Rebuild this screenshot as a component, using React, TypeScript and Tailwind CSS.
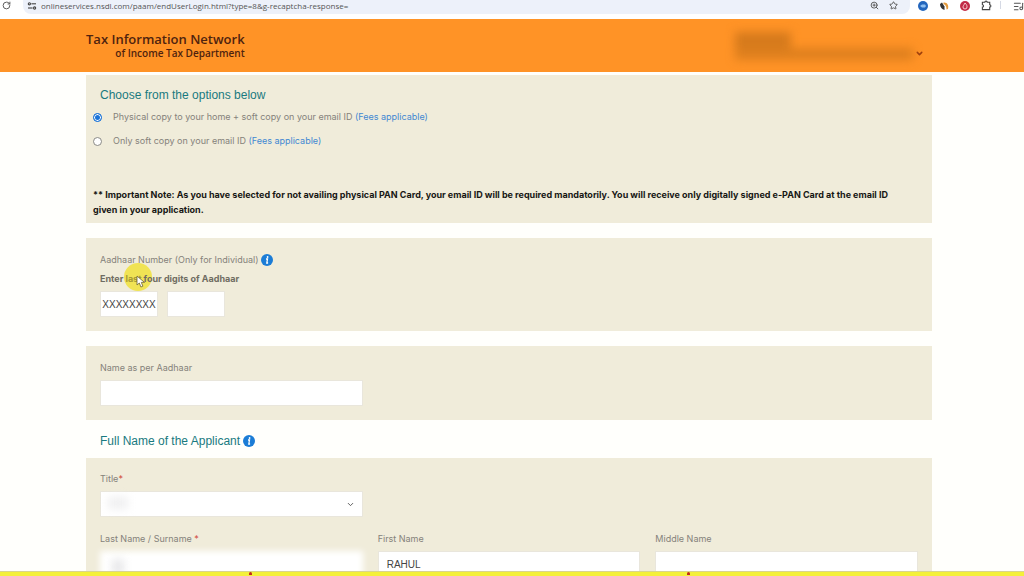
import type { FC, PropsWithChildren, ReactNode } from "react";
import { ChevronDown, ListMusic, RotateCw, Star, ZoomIn } from "lucide-react";

const Panel: FC<PropsWithChildren<{ className: string }>> = ({ className, children }) => (
  <section className={`bg-[#f0ecda] ${className}`}>{children}</section>
);

const Heading: FC<PropsWithChildren> = ({ children }) => (
  <h2 className="flex items-center gap-[3px] font-['Liberation_Sans',Arial,sans-serif] text-[12px] leading-4 text-[#197a80]">
    {children}
  </h2>
);

const InfoButton: FC<{ label: string }> = ({ label }) => (
  <button type="button" aria-label={label} className="shrink-0">
    <svg viewBox="0 0 12 12" className="size-3">
      <circle cx="6" cy="6" r="6" fill="#1b7cd6" />
      <circle cx="6.6" cy="3" r="0.9" fill="#fff" />
      <path d="M5 5h1.500L5.800 9h1.300" fill="none" stroke="#fff" strokeWidth="1.3" />
    </svg>
  </button>
);

interface OptionProps {
  id: string;
  label: string;
  defaultChecked?: boolean;
}

const Option: FC<OptionProps> = ({ id, label, defaultChecked }) => (
  <div className="flex items-center gap-[11px] h-4">
    <input
      type="radio"
      id={id}
      name="copy"
      defaultChecked={defaultChecked}
      className="appearance-none size-[9px] rounded-full border border-[#8a8a86] bg-white checked:border-[#1a73d8] checked:bg-[#1a73d8] checked:shadow-[inset_0_0_0_1px_white]"
    />
    <label htmlFor={id}>
      {label} <a href="#fees" className="text-[#4288d2]">(Fees applicable)</a>
    </label>
  </div>
);

interface FieldProps {
  id: string;
  label: ReactNode;
  children: ReactNode;
}

const Field: FC<FieldProps> = ({ id, label, children }) => (
  <div className="flex flex-col gap-1">
    <label htmlFor={id} className="leading-4">{label}</label>
    {children}
  </div>
);

const inputClass =
  "w-full h-[26px] bg-white border border-[#e9e6dc] font-['Liberation_Sans',Arial,sans-serif] text-[10px] text-[#444] outline-none";

const Required = () => <span className="text-[#d0483c]">*</span>;

const BrowserBar = () => (
  <div className="flex h-[19px] shrink-0 items-start bg-white text-[#555]">
    <button type="button" aria-label="Reload" className="ml-0.5 mt-px">
      <RotateCw size={9} strokeWidth={2.5} />
    </button>
    <div className="ml-3 flex h-[14px] flex-1 items-start gap-1 rounded-b-lg bg-[#edf1fa]">
      <button type="button" aria-label="Site information" className="ml-1 mt-px">
        <svg viewBox="0 0 10 10" className="size-[10px]" fill="none" stroke="#444" strokeWidth="1.1">
          <circle cx="2.4" cy="2.8" r="1.1" />
          <path d="M4.400 2.800H9" />
          <circle cx="7.6" cy="7" r="1.1" />
          <path d="M1 7h4.600" />
        </svg>
      </button>
      <input
        aria-label="Address"
        readOnly
        value="onlineservices.nsdl.com/paam/endUserLogin.html?type=8&g-recaptcha-response="
        className="h-3 flex-1 bg-transparent font-['Open_Sans',sans-serif] text-[8px] leading-3 text-[#555] outline-none"
      />
      <button type="button" aria-label="Zoom" className="mr-1.5 mt-px">
        <ZoomIn size={9} strokeWidth={2.5} />
      </button>
      <button type="button" aria-label="Bookmark" className="mr-3 mt-px">
        <Star size={9} strokeWidth={2.5} />
      </button>
    </div>
    <div className="ml-2 flex items-center gap-[11px]">
      <svg viewBox="0 0 10 10" className="size-[10px]">
        <circle cx="5" cy="5" r="5" fill="#2366bd" />
        <path d="M2 5l2-1.500h3L8 5 7 6.500H4z" fill="#8fc0f2" />
      </svg>
      <svg viewBox="0 0 10 10" className="size-[10px]">
        <path d="M1 3l2-1.500 2.500 4V9C3 8.500 1 6 1 3z" fill="#333" />
        <path d="M4.500 1.500C8 1 10 4 9 8L7.500 8.500C7.500 5.500 6.500 4 4.500 3z" fill="#e49a3c" />
      </svg>
      <svg viewBox="0 0 10 10" className="size-[10px]">
        <circle cx="5" cy="5" r="5" fill="#c22c47" />
        <path d="M5 2c2 2 2 3 2 4a2 2 0 0 1-4 0c0-1 1-2 2-4z" fill="none" stroke="#f8ccd2" />
      </svg>
      <button type="button" aria-label="Extensions">
        <svg viewBox="0 0 12 12" className="size-[11px]" fill="none" stroke="#444" strokeWidth="1.2">
          <path d="M1.500 2.500h2.700a1.300 1.300 0 0 1 2.600 0h2.700v2.700a1.300 1.300 0 0 1 0 2.600v2.700h-8V7.800a1.300 1.300 0 0 0 0-2.600z" />
        </svg>
      </button>
    </div>
    <div className="ml-2 mt-px h-2 w-px bg-[#d5d9e4]" />
    <button type="button" aria-label="Media" className="ml-3 mt-px w-[11px] overflow-hidden">
      <ListMusic size={11} strokeWidth={2.2} />
    </button>
  </div>
);

const Header = () => (
  <header className="flex h-[53px] shrink-0 justify-between bg-[#ff9326] pl-[86px] pr-[100px]">
    <h1 className="pt-3 text-right font-['Open_Sans',sans-serif] font-semibold text-[#4f230f]">
      <span className="block text-[13px] leading-4">Tax Information Network</span>
      <span className="block text-[10px] leading-3">of Income Tax Department</span>
    </h1>
    <button type="button" aria-label="Account" className="flex items-end gap-0.5 pb-3">
      <span className="flex flex-col blur-[5px]">
        <span className="h-4 w-[56px] bg-[#d67a1c]" />
        <span className="h-3 w-[178px] bg-[#d67a1c]/80" />
      </span>
      <ChevronDown size={9} strokeWidth={4} className="mb-0.5 text-[#9c3d0c]" />
    </button>
  </header>
);

const OptionsPanel = () => (
  <Panel className="h-[148px] px-[7px] pt-3">
    <div className="pl-[7px]">
      <Heading>Choose from the options below</Heading>
    </div>
    <div className="mt-1.5 flex flex-col gap-2">
      <Option id="physical" label="Physical copy to your home + soft copy on your email ID" defaultChecked />
      <Option id="soft" label="Only soft copy on your email ID" />
    </div>
    <p className="mt-[38px] pr-3 font-bold leading-[15px] text-[#171714]">
      ** Important Note: As you have selected for not availing physical PAN Card, your email ID will
      be required mandatorily. You will receive only digitally signed e-PAN Card at the email ID
      given in your application.
    </p>
  </Panel>
);

const AadhaarPanel = () => (
  <Panel className="mt-[15px] h-[93px] px-[14px] pt-[14px]">
    <div className="flex items-center gap-[3px] leading-4">
      Aadhaar Number (Only for Individual)
      <InfoButton label="About Aadhaar number" />
    </div>
    <div className="relative mt-[3px] w-fit leading-4">
      <div className="absolute -top-2 left-6 size-7 rounded-full bg-[#f0e23c]/85" />
      <label htmlFor="digits" className="relative font-bold text-[#6f6c62]">
        Enter <span className="text-[#a69a35]">last</span> four digits of Aadhaar
      </label>
      <svg viewBox="0 0 10 14" className="absolute left-9 top-1 h-[14px] w-[10px]">
        <path d="M1 1v9l2.300-2 1.600 4 2-.8L5.300 7.400H8.500z" fill="#fff" stroke="#6d6632" strokeWidth="0.8" />
      </svg>
    </div>
    <div className="mt-1 flex gap-[9px]">
      <div className="w-[58px]">
        <input aria-label="Masked digits" readOnly value="XXXXXXXX" className={`${inputClass} text-center`} />
      </div>
      <div className="w-[58px]">
        <input id="digits" className={inputClass} />
      </div>
    </div>
  </Panel>
);

const NamePanel = () => (
  <Panel className="mt-[15px] h-[74px] px-[14px] pt-[14px]">
    <div className="grid grid-cols-3 gap-[15px]">
      <Field id="aadhaar-name" label="Name as per Aadhaar">
        <input id="aadhaar-name" className={inputClass} />
      </Field>
    </div>
  </Panel>
);

const ApplicantPanel = () => (
  <Panel className="px-[14px] pb-4 pt-[13px]">
    <div className="grid grid-cols-3 gap-x-[15px] gap-y-[14px]">
      <Field id="title" label={<>Title<Required /></>}>
        <div className="relative">
          <select id="title" className={`${inputClass} block appearance-none`} />
          <span className="absolute left-2 top-1.5 h-3 w-5 bg-[#f0f0f1] blur-[4px]" />
          <ChevronDown size={9} strokeWidth={2.5} className="absolute right-2 top-[9px] text-[#555]" />
        </div>
      </Field>
      <div className="col-span-2" />
      <Field id="last-name" label={<>Last Name / Surname <Required /></>}>
        <div className="relative">
          <input id="last-name" className="w-full h-[26px] bg-white outline-none blur-[3px]" />
          <span className="absolute left-3 top-2 h-4 w-3 bg-[#e8e8ea] blur-[4px]" />
        </div>
      </Field>
      <Field id="first-name" label="First Name">
        <input id="first-name" defaultValue="RAHUL" className={`${inputClass} px-2`} />
      </Field>
      <Field id="middle-name" label="Middle Name">
        <input id="middle-name" className={inputClass} />
      </Field>
    </div>
  </Panel>
);

export default function App() {
  return (
    <div className="flex h-screen flex-col overflow-hidden bg-[#fffffc] font-['Inter',Arial,sans-serif] text-[9px] text-[#85827a]">
      <BrowserBar />
      <Header />
      <main className="min-h-0 flex-1 overflow-hidden pl-[86px] pr-[92px] pt-[3px]">
        <OptionsPanel />
        <AadhaarPanel />
        <NamePanel />
        <div className="pb-[9px] pl-[14px] pt-[13px]">
          <Heading>
            Full Name of the Applicant
            <InfoButton label="About applicant name" />
          </Heading>
        </div>
        <ApplicantPanel />
      </main>
      <footer className="flex h-[5px] shrink-0 justify-between border-t border-[#d9d68a] bg-[#f4f03a] pl-[249px] pr-[334px]">
        <span className="size-[3px] rounded-t-full bg-[#c22a1c]" />
        <span className="size-[3px] rounded-t-full bg-[#c22a1c]" />
      </footer>
    </div>
  );
}
